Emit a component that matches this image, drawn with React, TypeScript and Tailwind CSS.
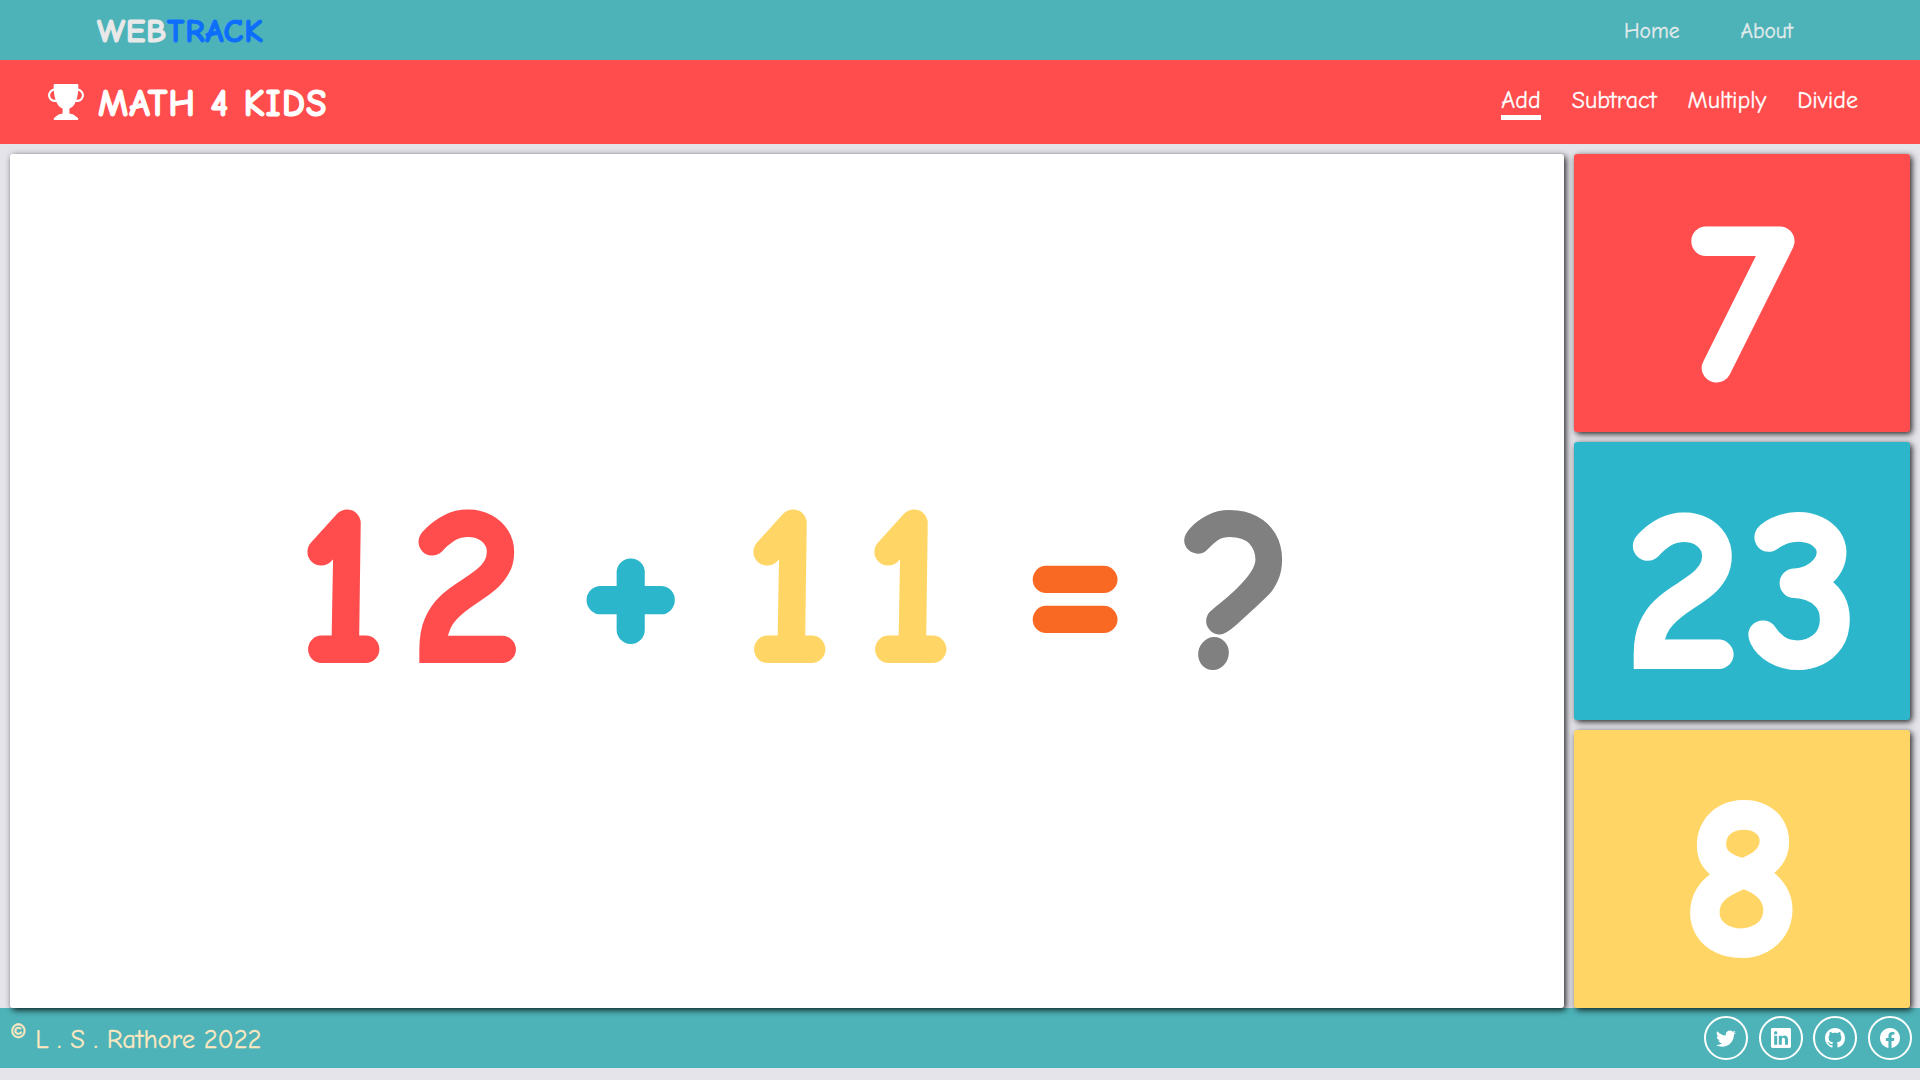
import { BsTrophyFill, BsTwitter, BsLinkedin, BsGithub, BsFacebook } from "react-icons/bs";

const font = "font-['Comic_Sans_MS','Comic_Neue','Lato','Noto_Sans',sans-serif]";

function Glyph({ ch, className }: { ch: string; className: string }) {
  return <span className={`${className} text-center`}>{ch}</span>;
}

function Answer({ value, bg }: { value: string; bg: string }) {
  return (
    <div className={`${bg} flex h-[278px] items-center justify-center rounded-[3px] pl-[8px] pt-[21px] text-[225px] font-bold leading-none tracking-[8px] text-white shadow-[2px_2px_6px_rgba(0,0,0,0.85)] [-webkit-text-stroke:8px_white]`}>
      {value}
    </div>
  );
}

export default function App() {
  return (
    <div className={`${font} flex h-[1080px] w-full flex-col overflow-hidden bg-[#e4e4ea]`}>
      <header className="flex h-[60px] shrink-0 items-center justify-between bg-[#4db3b8] pl-[97px] pr-[127px]">
        <div className="pt-[2px] text-[33px] font-bold leading-none tracking-[0.8px] [-webkit-text-stroke:1px_currentColor]">
          <span className="text-[#e9e9e9]">WEB</span>
          <span className="text-[#0d6efd]">TRACK</span>
        </div>
        <nav className="flex gap-[62px] pt-[2px] text-[21.5px] text-[#e4ecec] [-webkit-text-stroke:0.3px_currentColor]">
          <a>Home</a>
          <a className="-ml-[1px]">About</a>
        </nav>
      </header>

      <div className="flex h-[84px] shrink-0 items-center justify-between bg-[#ff4d4d] pl-[47px] pr-[62px] text-white">
        <div className="flex items-center gap-[13px]">
          <BsTrophyFill className="h-[36px] w-[38px]" />
          <h1 className="pt-[4px] text-[37.5px] font-bold leading-none tracking-[1px] [-webkit-text-stroke:1px_white]">MATH 4 KIDS</h1>
        </div>
        <nav className="flex items-center gap-[31px] text-[24px] [-webkit-text-stroke:0.3px_white]">
          <a className="border-b-[5px] border-white leading-[30px]">Add</a>
          <a className="border-b-[5px] border-transparent leading-[30px]">Subtract</a>
          <a className="border-b-[5px] border-transparent leading-[30px]">Multiply</a>
          <a className="border-b-[5px] border-transparent leading-[30px]">Divide</a>
        </nav>
      </div>

      <main className="relative z-10 flex h-[864px] shrink-0 gap-[10px] px-[10px] pt-[10px]">
        <section className="flex h-[854px] w-[1555px] items-center justify-center rounded-[3px] bg-white pt-[14px] shadow-[2px_2px_6px_rgba(0,0,0,0.85)]">
          <div className="flex items-center text-[222px] font-bold leading-none [-webkit-text-stroke:6px_currentColor]">
            <Glyph ch="1" className="w-[125px] text-[#ff4d4d]" />
            <Glyph ch="2" className="w-[125px] text-[#ff4d4d]" />
            <Glyph ch="+" className="mb-[14px] ml-[4px] mr-[-1px] w-[195px] text-[235px] text-[#2cb6cc]" />
            <Glyph ch="1" className="w-[121px] text-[#ffd666]" />
            <Glyph ch="1" className="w-[121px] text-[#ffd666]" />
            <Glyph ch="=" className="mb-[13px] w-[212px] text-[#f96923]" />
            <Glyph ch="?" className="mt-[12px] w-[114px] text-[#808080]" />
          </div>
        </section>
        <aside className="flex w-[336px] flex-col gap-[10px]">
          <Answer value="7" bg="bg-[#ff4d4d]" />
          <Answer value="23" bg="bg-[#2cb6cc]" />
          <Answer value="8" bg="bg-[#ffd666]" />
        </aside>
      </main>

      <footer className="flex h-[60px] shrink-0 items-center justify-between bg-[#4db3b8] pl-[10px] pr-[8px]">
        <p className="pt-[2px] text-[26.5px] leading-none text-[#fde8c0] [-webkit-text-stroke:0.3px_currentColor]">
          <span className="relative top-[-3px] text-[30px]">©</span> L . S . Rathore 2022
        </p>
        <div className="flex gap-[10.6px] text-white">
          {[BsTwitter, BsLinkedin, BsGithub, BsFacebook].map((Icon, i) => (
            <a key={i} className="flex h-[44px] w-[44px] items-center justify-center rounded-full border-2 border-white">
              <Icon className="h-[20px] w-[20px]" />
            </a>
          ))}
        </div>
      </footer>
    </div>
  );
}
